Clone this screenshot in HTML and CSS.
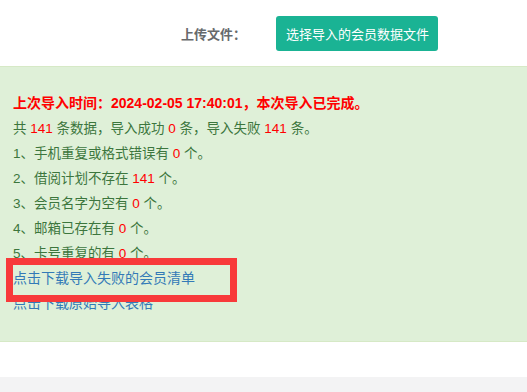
FILE: index.html
```html
<!DOCTYPE html>
<html lang="zh-CN">
  <head>
    <meta charset="UTF-8" />
    <title>会员导入</title>
    <link rel="stylesheet" href="styles.css">
  </head>
  <body>
    <div class="panel">
      <div class="upload-row">
        <label class="upload-label">上传文件：</label>
        <a class="btn-primary">选择导入的会员数据文件</a>
      </div>
      <div class="alert">
        <p class="done">上次导入时间：2024-02-05 17:40:01，本次导入已完成。</p>
        <p>共 <span class="num">141</span> 条数据，导入成功 <span class="num">0</span> 条，导入失败 <span class="num">141</span> 条。</p>
        <p>1、手机重复或格式错误有 <span class="num">0</span> 个。</p>
        <p>2、借阅计划不存在 <span class="num">141</span> 个。</p>
        <p>3、会员名字为空有 <span class="num">0</span> 个。</p>
        <p>4、邮箱已存在有 <span class="num">0</span> 个。</p>
        <p>5、卡号重复的有 <span class="num">0</span> 个。</p>
        <p><a class="link">点击下载导入失败的会员清单</a></p>
        <p><a class="link">点击下载原始导入表格</a></p>
        <div class="mark"></div>
      </div>
    </div>
  </body>
</html>
```

FILE: styles.css
```css
body {
  margin: 0;
  background-color: #f3f3f4;
  font-family: "Liberation Sans", "Noto Sans CJK SC", sans-serif;
  font-size: 13px;
}

.panel {
  background-color: #fff;
  padding-bottom: 35px;
}

.upload-row {
  display: flex;
  align-items: center;
  height: 66px;
}

.upload-label {
  width: 246px;
  margin-right: 30px;
  text-align: right;
  font-weight: bold;
  color: #676a6c;
}

.btn-primary {
  display: flex;
  align-items: center;
  height: 35px;
  padding: 0 9px 0 10px;
  border-radius: 3px;
  background-color: #1ab394;
  color: #fff;
  box-sizing: border-box;
  margin-top: 1px;
}

.alert {
  position: relative;
  padding: 24px 13px 25px;
  background-color: #dff0d8;
  border-top: 1px solid #d6e9c6;
  border-bottom: 1px solid #d6e9c6;
  color: #3c763d;
  font-size: 13.5px;
}

.alert p {
  margin: 0;
  line-height: 25px;
}

.alert p.done {
  color: #f00;
  font-weight: bold;
  font-size: 14px;
}

.num {
  color: #f00;
}

.link {
  color: #337ab7;
  font-size: 14px;
}

.mark {
  position: absolute;
  left: 6px;
  top: 191px;
  width: 217px;
  height: 30px;
  border: 7px solid #f83a3a;
}
```
